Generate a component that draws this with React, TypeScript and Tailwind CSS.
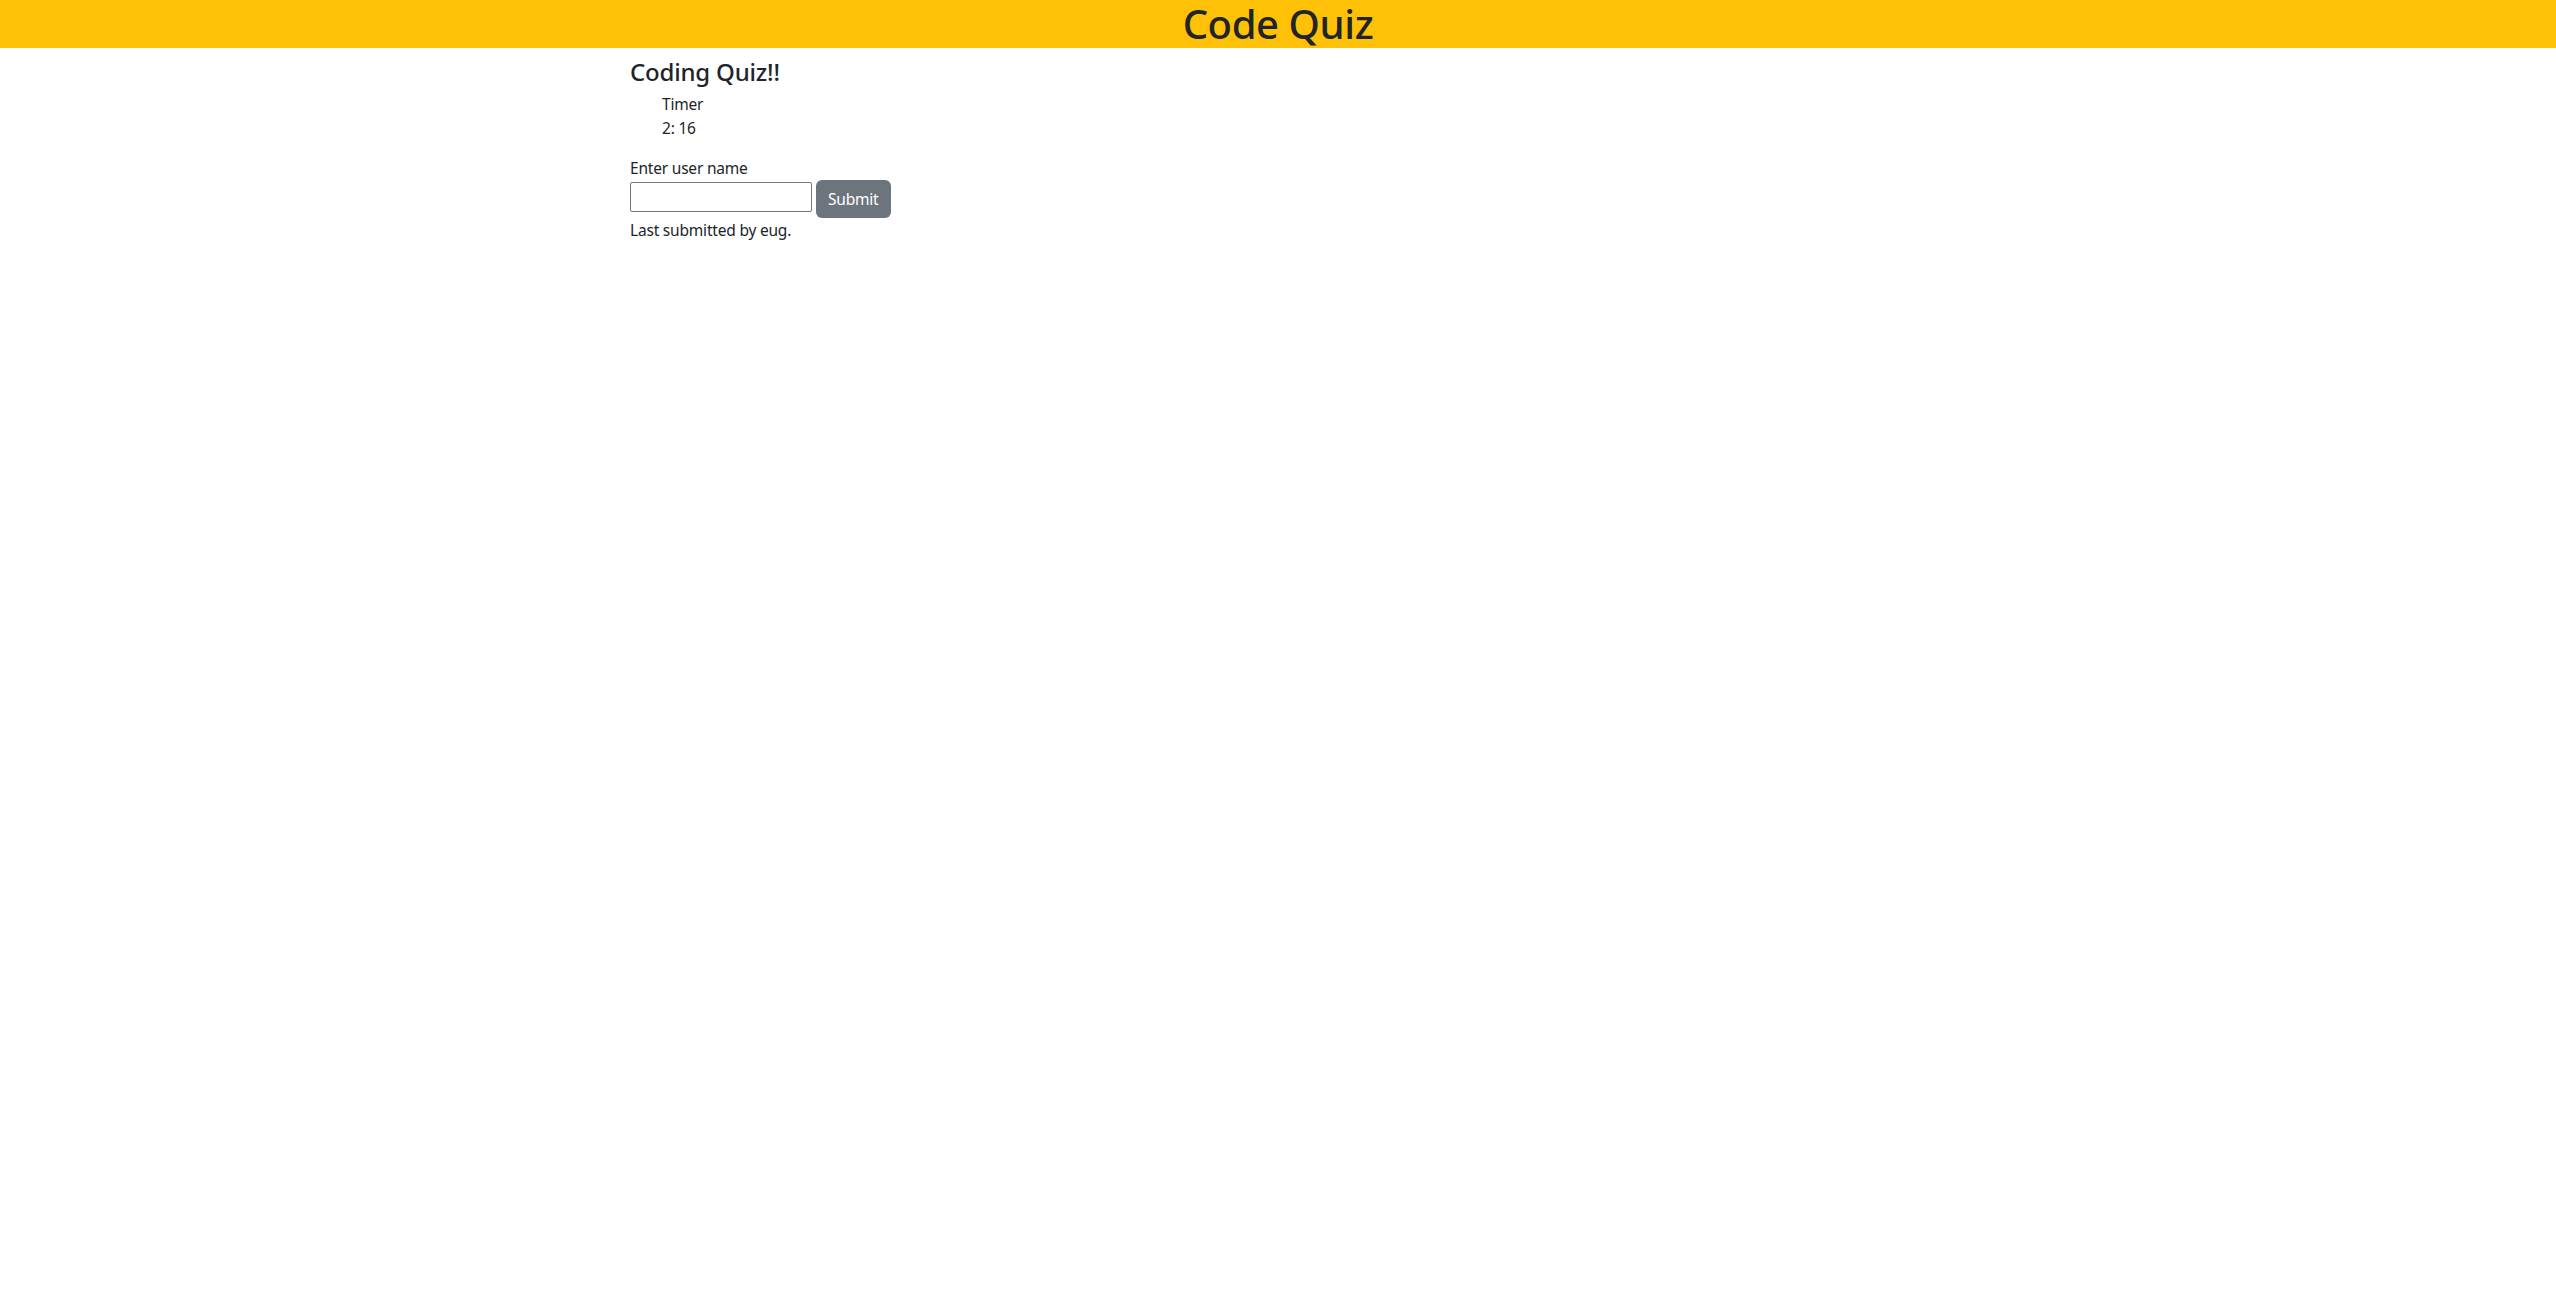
import React, { useState } from 'react';

export default function App() {
  const [name, setName] = useState('');
  const [lastUser, setLastUser] = useState('eug');

  const handleSubmit = (e: React.FormEvent<HTMLFormElement>) => {
    e.preventDefault();
    if (name.trim()) setLastUser(name.trim());
    setName('');
  };

  return (
    <div className="min-h-screen bg-white text-[#212529] font-['Noto_Sans',sans-serif] text-[15.5px] leading-6 tracking-[-0.2px]">
      <h1 className="bg-[#ffc107] text-center text-[40px] leading-[48px] font-medium tracking-[-0.4px]">Code Quiz</h1>
      <div className="mx-auto max-w-[1320px] px-3">
        <h4 className="mt-[9px] text-[24px] leading-[29px] font-medium tracking-[-0.2px]">Coding Quiz!!</h4>
        <ul className="mt-[6px] pl-8">
          <li>Timer</li>
          <li>2: 16</li>
        </ul>
        <form onSubmit={handleSubmit} className="mt-[16px]">
          <label htmlFor="username" className="block">Enter user name</label>
          <div className="flex items-start gap-[4px]">
            <input
              id="username"
              type="text"
              value={name}
              onChange={(e) => setName(e.target.value)}
              className="mt-[2px] h-[30px] w-[182px] rounded-[2px] border border-[#767676] px-1"
            />
            <button type="submit" className="h-[38px] rounded-md bg-[#6c757d] px-3 text-white">
              Submit
            </button>
          </div>
        </form>
        <p className="mt-0">Last submitted by {lastUser}.</p>
      </div>
    </div>
  );
}
